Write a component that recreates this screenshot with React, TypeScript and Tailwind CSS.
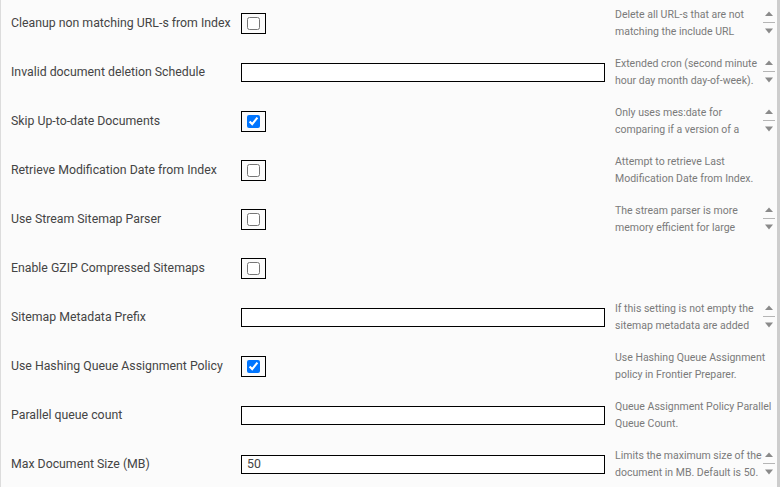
import React from 'react'

type Setting = {
  label: string
  kind: 'check' | 'text'
  checked?: boolean
  value?: string
  help?: string[]
  spinner?: boolean
}

const settings: Setting[] = [
  { label: 'Cleanup non matching URL-s from Index', kind: 'check', help: ['Delete all URL-s that are not', 'matching the include URL'], spinner: true },
  { label: 'Invalid document deletion Schedule', kind: 'text', help: ['Extended cron (second minute', 'hour day month day-of-week).'], spinner: true },
  { label: 'Skip Up-to-date Documents', kind: 'check', checked: true, help: ['Only uses mes:date for', 'comparing if a version of a'], spinner: true },
  { label: 'Retrieve Modification Date from Index', kind: 'check', help: ['Attempt to retrieve Last', 'Modification Date from Index.'] },
  { label: 'Use Stream Sitemap Parser', kind: 'check', help: ['The stream parser is more', 'memory efficient for large'], spinner: true },
  { label: 'Enable GZIP Compressed Sitemaps', kind: 'check' },
  { label: 'Sitemap Metadata Prefix', kind: 'text', help: ['If this setting is not empty the', 'sitemap metadata are added'], spinner: true },
  { label: 'Use Hashing Queue Assignment Policy', kind: 'check', checked: true, help: ['Use Hashing Queue Assignment', 'policy in Frontier Preparer.'] },
  { label: 'Parallel queue count', kind: 'text', help: ['Queue Assignment Policy Parallel', 'Queue Count.'] },
  { label: 'Max Document Size (MB)', kind: 'text', value: '50', help: ['Limits the maximum size of the', 'document in MB. Default is 50.'], spinner: true },
]

function Spinner() {
  return (
    <svg width="14" height="28" viewBox="0 0 14 28" className="block">
      <path d="M3 7 L7 2.5 L11 7 Z" fill="#8a8a8a" />
      <rect x="1" y="13" width="12" height="1" fill="#b5b5b5" />
      <path d="M3 19.5 L11 19.5 L7 24.5 Z" fill="#8a8a8a" />
    </svg>
  )
}

function Row({ s }: { s: Setting }) {
  return (
    <div className="flex h-[49px] items-center pb-[3px]">
      <div className="w-[240px] shrink-0 whitespace-nowrap pl-[10px] text-[12.3px] text-[#444]">{s.label}</div>
      <div className="w-[364px] shrink-0">
        {s.kind === 'check' ? (
          <div className="flex h-[21px] w-[25px] items-center justify-center border border-black">
            <input type="checkbox" defaultChecked={s.checked} className="m-0 h-[13px] w-[13px]" />
          </div>
        ) : (
          <input
            type="text"
            defaultValue={s.value}
            className="block h-[19px] w-full border border-black bg-white pl-[5px] text-[12.3px] text-[#444] outline-none"
          />
        )}
      </div>
      <div className="ml-[10px] w-[147px] shrink-0 text-[10.5px] leading-[17px] text-[#7a7a7a]">
        {s.help?.map((line) => (
          <div key={line} className="whitespace-nowrap">{line}</div>
        ))}
      </div>
      <div className="w-[15px] shrink-0">{s.spinner && <Spinner />}</div>
    </div>
  )
}

export default function App() {
  return (
    <div
      className="h-[487px] w-[780px] overflow-hidden border-l border-r-[3px] border-l-[#dcdcdc] border-r-[#cdcdcd] bg-[#fbfbfb]"
      style={{ fontFamily: 'Roboto, "Liberation Sans", sans-serif' }}
    >
      {settings.map((s) => (
        <Row key={s.label} s={s} />
      ))}
    </div>
  )
}
